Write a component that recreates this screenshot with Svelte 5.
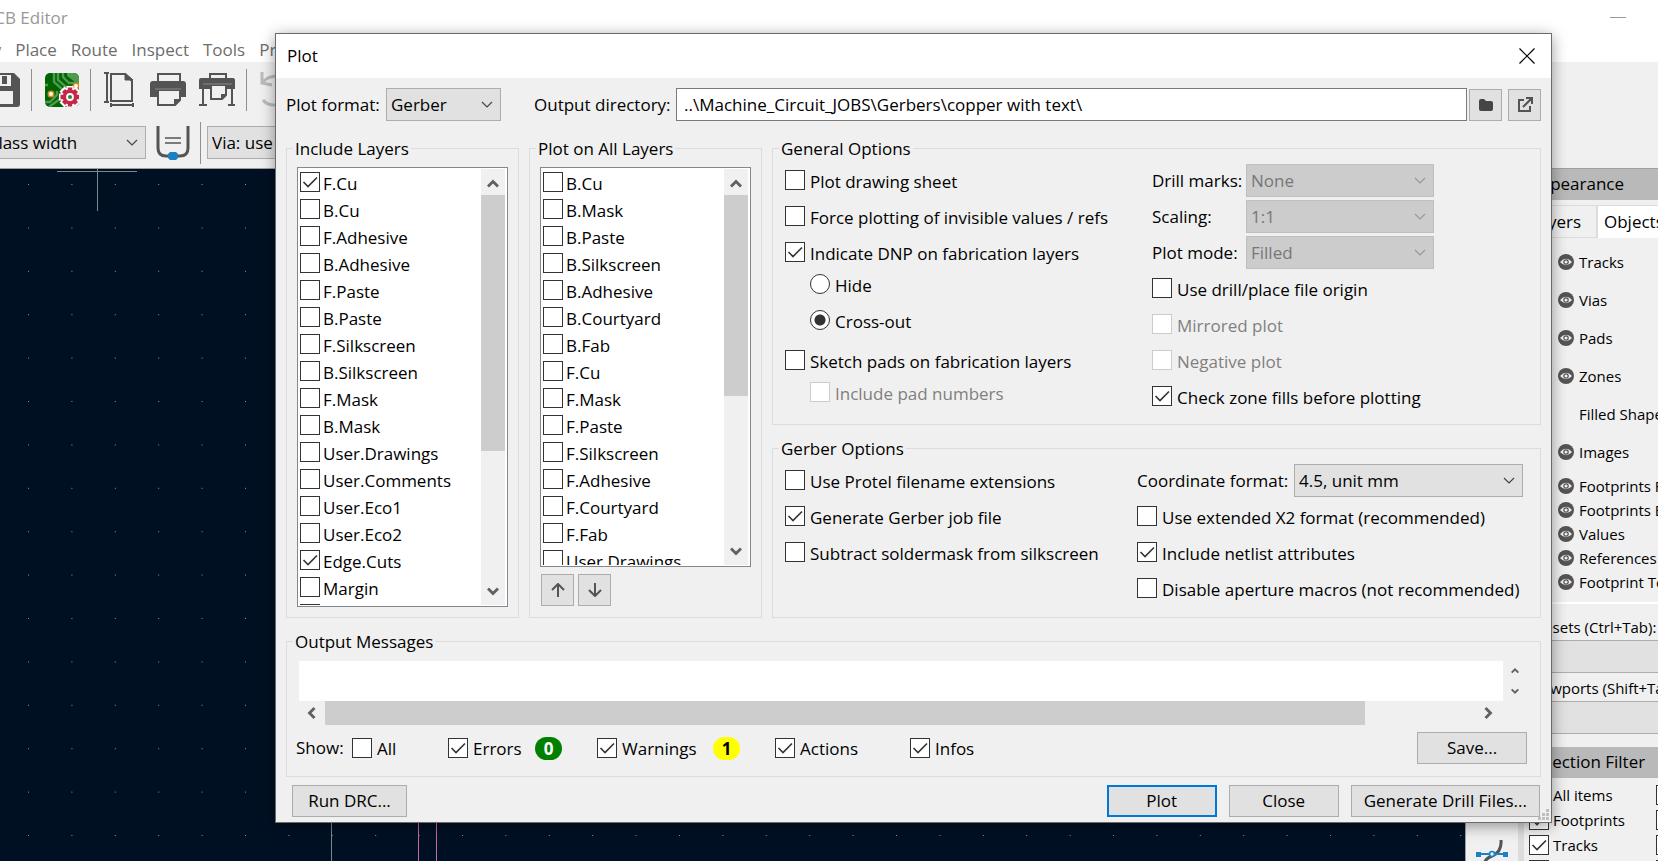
<script lang="ts">
    type Check = {label: string, on?: boolean, off?: boolean}

    const menus = ['View', 'Place', 'Route', 'Inspect', 'Tools', 'Preferences']

    const includeLayers = ['F.Cu', 'B.Cu', 'F.Adhesive', 'B.Adhesive', 'F.Paste', 'B.Paste', 'F.Silkscreen', 'B.Silkscreen',
        'F.Mask', 'B.Mask', 'User.Drawings', 'User.Comments', 'User.Eco1', 'User.Eco2', 'Edge.Cuts', 'Margin', 'F.Courtyard']
    const allLayers = ['B.Cu', 'B.Mask', 'B.Paste', 'B.Silkscreen', 'B.Adhesive', 'B.Courtyard', 'B.Fab', 'F.Cu', 'F.Mask',
        'F.Paste', 'F.Silkscreen', 'F.Adhesive', 'F.Courtyard', 'F.Fab', 'User.Drawings']
    const plotted = ['F.Cu', 'Edge.Cuts']

    const plotSelects = [
        {id: 'drill', label: 'Drill marks:', value: 'None'},
        {id: 'scaling', label: 'Scaling:', value: '1:1'},
        {id: 'mode', label: 'Plot mode:', value: 'Filled'},
    ]
    const plotChecks: Check[] = [
        {label: 'Use drill/place file origin'},
        {label: 'Mirrored plot', off: true},
        {label: 'Negative plot', off: true},
        {label: 'Check zone fills before plotting', on: true},
    ]
    const gerberLeft: Check[] = [
        {label: 'Use Protel filename extensions'},
        {label: 'Generate Gerber job file', on: true},
        {label: 'Subtract soldermask from silkscreen'},
    ]
    const gerberRight: Check[] = [
        {label: 'Use extended X2 format (recommended)'},
        {label: 'Include netlist attributes', on: true},
        {label: 'Disable aperture macros (not recommended)'},
    ]

    const objects = ['Tracks', 'Vias', 'Pads', 'Zones', 'Filled Shapes', 'Images']
    const footprintObjects = ['Footprints Front', 'Footprints Back', 'Values', 'References', 'Footprint Text']
    const filters = ['All items', 'Footprints', 'Tracks', 'Zones']
</script>

{#snippet check(item: Check)}
    <label class="check" class:off={item.off}>
        <input type="checkbox" checked={item.on} disabled={item.off}>
        <span>{item.label}</span>
    </label>
{/snippet}

{#snippet chevron(dir: string)}
    <svg class="chevron {dir}" width="12" height="12" viewBox="0 0 12 12"><path d="M1 8.500L6 3.500L11 8.500" fill="none" stroke="#606060" stroke-width="2.800"/></svg>
{/snippet}

{#snippet layerList(name: string, layers: string[], picked: string[], kind: string)}
    <div class="list {kind}" role="group" aria-label={name}>
        <div class="rows">
            {#each layers as layer}
                {@render check({label: layer, on: picked.includes(layer)})}
            {/each}
        </div>
        <div class="scroll">
            {@render chevron('up')}
            <div class="thumb"></div>
            {@render chevron('down')}
        </div>
    </div>
{/snippet}

{#snippet eye()}
    <svg width="16" height="16" viewBox="0 0 16 16">
        <circle cx="8" cy="8" r="8" fill="#545454"/>
        <path d="M2 8Q8 1.500 14 8Q8 14.500 2 8Z" fill="#f0f0f0"/>
        <circle cx="8" cy="8" r="2.200" fill="#f0f0f0" stroke="#545454" stroke-width="1.200"/>
    </svg>
{/snippet}

<div class="editor">
    <header class="titlebar">
        <span class="title">PCB Editor</span>
        <svg width="16" height="2"><path d="M0 .5H16" stroke="#999"/></svg>
    </header>
    <nav class="menubar">
        {#each menus as menu}<button>{menu}</button>{/each}
    </nav>

    <div class="toolbar main-tools">
        <svg width="20" height="34" viewBox="0 0 20 34">
            <path d="M-14 0H14L20 6V31Q20 34 17 34H-14Z" fill="#545454"/>
            <path d="M-8 2H11V13H-8ZM-8 18H13V31H-8Z" fill="#f0f0f0"/>
            <path d="M2 3H7V11H2Z" fill="#545454"/>
        </svg>
        <i></i>
        <svg width="34" height="34" viewBox="0 0 34 34">
            <clipPath id="board"><rect width="34" height="34" rx="5"/></clipPath>
            <g clip-path="url(#board)">
                <rect width="34" height="34" fill="#006400"/>
                <path d="M13 0V7L21 14H34M18 0V4L24 10H34M9 0V9L17 16V22M0 29L5 29L12 22V18M4 34L15 26V23M0 12H3" fill="none" stroke="#4f9a4f" stroke-width="2.400"/>
                <path d="M22 0H34V9H30L22 3Z" fill="#4f9a4f"/>
                <circle cx="6" cy="21" r="2.700" fill="#fff" stroke="#e08a1e" stroke-width="1.600"/>
                <circle cx="31" cy="13" r="2.700" fill="#fff" stroke="#e08a1e" stroke-width="1.600"/>
                <circle cx="30" cy="33" r="2.700" fill="#fff" stroke="#e08a1e" stroke-width="1.600"/>
                <path d="M25 13V35M14 24H36M17 16L33 32M33 16L17 32" stroke="#fff" stroke-width="7"/>
                <path d="M25 14.500V33.500M15.500 24H34.500M18.500 17.500L31.500 30.500M31.500 17.500L18.500 30.500" stroke="#c8254b" stroke-width="4.400"/>
                <circle cx="25" cy="24" r="7.400" fill="#c8254b"/>
                <circle cx="25" cy="24" r="3" fill="#2f8a3b" stroke="#fff" stroke-width="1.800"/>
            </g>
        </svg>
        <i></i>
        <svg class="page" width="30" height="36" viewBox="0 0 30 36" fill="none" stroke="#545454">
            <path d="M7 2H21L28 9V29H7Z" stroke-width="2"/><path d="M21 1V8H29Z" fill="#545454"/>
            <path d="M3 1V30M0 1H5M0 30H5M7 33H29M7 31V35M29 31V35" stroke-width="2"/>
        </svg>
        <svg width="36" height="34" viewBox="0 0 36 34">
            <path d="M8 1H30V9H8Z" fill="#f0f0f0" stroke="#545454" stroke-width="2"/>
            <path d="M3 8H33Q36 8 36 11V24H0V11Q0 8 3 8Z" fill="#545454"/>
            <path d="M8 17H30V27L25 32H8Z" fill="#f0f0f0" stroke="#545454" stroke-width="2"/>
            <path d="M5 16H31" stroke="#888"/><path d="M24 26H31L24 33Z" fill="#545454"/>
        </svg>
        <svg width="36" height="34" viewBox="0 0 36 34">
            <path d="M11 1H27V6H11Z" fill="#f0f0f0" stroke="#545454" stroke-width="2"/>
            <path d="M2 5H34Q36 5 36 7V16H0V7Q0 5 2 5Z" fill="#545454"/>
            <path d="M4 16V32M0 32H8M33 16V32M29 32H36" stroke="#545454" stroke-width="2"/>
            <path d="M12 12H27V22L23 26H12Z" fill="#f0f0f0" stroke="#545454" stroke-width="2"/>
            <path d="M4 11H33" stroke="#888"/><path d="M22 21H28L22 27Z" fill="#545454"/>
        </svg>
        <i></i>
        <svg width="34" height="36" viewBox="0 0 34 36" fill="none" stroke="#bbb" stroke-width="3">
            <path d="M2 0V11L12 13M2 11Q10 2 20 5Q30 9 28 20Q25 34 12 33Q6 32 3 28"/>
        </svg>
    </div>

    <div class="toolbar sub-tools">
        <select aria-label="Track width"><option>Track: use netclass width</option></select>
        <svg width="34" height="34" viewBox="0 0 34 34" fill="none" stroke="#545454">
            <path d="M2 0V22Q2 30 10 30H24Q32 30 32 22V0" stroke-width="3"/>
            <path d="M9 12H25M9 17H25" stroke-width="1.500"/>
            <path d="M14 26H20L22 28V32L20 34H14L12 32V28Z" fill="#1a81c4" stroke="none"/>
        </svg>
        <i></i>
        <select aria-label="Via size"><option>Via: use netclass sizes</option></select>
    </div>

    <div class="workspace">
        <svg class="canvas">
            <defs>
                <pattern id="grid" width="43.400" height="43.400" patternUnits="userSpaceOnUse" x="28" y="15"><path d="M0 .5H1" stroke="#8d979f"/></pattern>
            </defs>
            <rect width="100%" height="100%" fill="url(#grid)"/>
            <path d="M57 2.500H137M97.500 0V42M331.500 600V800" stroke="#7d8791"/>
            <path d="M418.500 600V800M436.500 600V800" stroke="#c868a8"/>
        </svg>
        <div class="side-tools">
            <svg width="34" height="34" viewBox="0 0 34 34" fill="none">
                <path d="M26 0Q27 12 17 16Q7 19 8 34" stroke="#545454" stroke-width="3"/>
                <path d="M2 14H32" stroke="#1a81c4" stroke-width="2"/>
                <path d="M1 12H6V17H1ZM28 12H33V17H28Z" fill="#1a81c4"/>
                <circle cx="17" cy="14" r="2.500" fill="#f0f0f0" stroke="#1a81c4" stroke-width="1.600"/>
            </svg>
        </div>
        <aside>
            <h2>Appearance</h2>
            <div class="tabs"><button>Layers</button><button class="current">Objects</button></div>
            <ul class="objects">
                {#each objects as name}<li><b>{#if name !== 'Filled Shapes'}{@render eye()}{/if}</b>{name}</li>{/each}
            </ul>
            <ul class="objects tight">
                {#each footprintObjects as name}<li><b>{@render eye()}</b>{name}</li>{/each}
            </ul>
            <div class="presets">
                <label for="presets">Presets (Ctrl+Tab):</label>
                <select id="presets"><option>---</option></select>
                <label for="viewports">Viewports (Shift+Tab):</label>
                <select id="viewports"><option>---</option></select>
            </div>
            <h2 class="filter-head">Selection Filter</h2>
            <div class="filters">
                {#each filters as name}
                    {@render check({label: name, on: true})}
                    <input type="checkbox" aria-label="{name} filter">
                {/each}
            </div>
        </aside>
    </div>
</div>

<div class="dialog" role="dialog" aria-label="Plot">
    <header>
        <h1>Plot</h1>
        <button class="x" aria-label="Close dialog"><svg width="16" height="16" viewBox="0 0 16 16"><path d="M.5.5L15.500 15.500M15.500.5L.5 15.500" stroke="#000" stroke-width="1.200"/></svg></button>
    </header>

    <div class="output-row">
        <label for="format">Plot format:</label>
        <select id="format"><option>Gerber</option></select>
        <label for="directory">Output directory:</label>
        <input id="directory" type="text" value="..\Machine_Circuit_JOBS\Gerbers\copper with text\">
        <button class="small" aria-label="Browse"><svg width="14" height="12" viewBox="0 0 14 12"><path d="M0 2Q0 0 2 0H5L7 2H12Q14 2 14 4V10Q14 12 12 12H2Q0 12 0 10Z" fill="#454545"/></svg></button>
        <button class="small" aria-label="Open directory"><svg width="16" height="16" viewBox="0 0 16 16" fill="none" stroke="#545454" stroke-width="2"><path d="M7 3H2V14H13V9M9 1H15V7M15 1L6 10"/></svg></button>
    </div>

    <div class="groups">
        <fieldset class="layers">
            <legend>Include Layers</legend>
            {@render layerList('Include layers', includeLayers, plotted, 'tall')}
        </fieldset>
        <fieldset class="layers">
            <legend>Plot on All Layers</legend>
            {@render layerList('Plot on all layers', allLayers, [], 'short')}
            <div class="move">
                <button class="small" aria-label="Move up"><svg width="14" height="14" viewBox="0 0 14 14"><path d="M7 14V2M1 7L7 1L13 7" fill="none" stroke="#545454" stroke-width="2"/></svg></button>
                <button class="small" aria-label="Move down"><svg width="14" height="14" viewBox="0 0 14 14"><path d="M7 0V12M1 7L7 13L13 7" fill="none" stroke="#545454" stroke-width="2"/></svg></button>
            </div>
        </fieldset>

        <div class="options">
            <fieldset class="general">
                <legend>General Options</legend>
                <div class="col">
                    {@render check({label: 'Plot drawing sheet'})}
                    {@render check({label: 'Force plotting of invisible values / refs'})}
                    {@render check({label: 'Indicate DNP on fabrication layers', on: true})}
                    <div class="nested dnp">
                        <label class="check"><input type="radio" name="dnp"><span>Hide</span></label>
                        <label class="check"><input type="radio" name="dnp" checked><span>Cross-out</span></label>
                    </div>
                    {@render check({label: 'Sketch pads on fabrication layers'})}
                    <div class="nested">
                        {@render check({label: 'Include pad numbers', off: true})}
                    </div>
                </div>
                <div class="col">
                    {#each plotSelects as item}
                        <div class="field">
                            <label for={item.id}>{item.label}</label>
                            <select id={item.id} disabled><option>{item.value}</option></select>
                        </div>
                    {/each}
                    {#each plotChecks as item}{@render check(item)}{/each}
                </div>
            </fieldset>

            <fieldset class="gerber">
                <legend>Gerber Options</legend>
                <div class="col">
                    {#each gerberLeft as item}{@render check(item)}{/each}
                </div>
                <div class="col">
                    <div class="field">
                        <label for="coords">Coordinate format:</label>
                        <select id="coords"><option>4.5, unit mm</option></select>
                    </div>
                    {#each gerberRight as item}{@render check(item)}{/each}
                </div>
            </fieldset>
        </div>
    </div>

    <fieldset class="messages">
        <legend>Output Messages</legend>
        <div class="log">
            <textarea aria-label="Output messages" readonly></textarea>
            <div class="spin">{@render chevron('up')}{@render chevron('down')}</div>
        </div>
        <div class="hscroll">
            {@render chevron('left')}
            <div class="track"><div class="thumb"></div></div>
            {@render chevron('right')}
        </div>
        <div class="show">
            <span>Show:</span>
            <div class="all">{@render check({label: 'All'})}</div>
            <div class="errors">{@render check({label: 'Errors', on: true})}<em class="badge green">0</em></div>
            <div class="warnings">{@render check({label: 'Warnings', on: true})}<em class="badge yellow">1</em></div>
            <div class="actions">{@render check({label: 'Actions', on: true})}</div>
            {@render check({label: 'Infos', on: true})}
            <button class="push">Save...</button>
        </div>
    </fieldset>

    <footer>
        <button class="push">Run DRC...</button>
        <button class="push default">Plot</button>
        <button class="push">Close</button>
        <button class="push">Generate Drill Files...</button>
    </footer>
    <svg class="grip" width="12" height="12" viewBox="0 0 12 12"><path d="M8 0H11V3H8ZM4 4H7V7H4ZM8 4H11V7H8ZM0 8H3V11H0ZM4 8H7V11H4ZM8 8H11V11H8Z" fill="#bfbfbf"/></svg>
</div>

<style>
    :global(body) {
        background: #f0f0f0;
        font: 17px/24px "Open Sans", "Noto Sans", sans-serif;
        color: #000;
        overflow: hidden;
    }

    * {
        box-sizing: border-box;
    }

    h1, h2, ul, li, fieldset, legend, input, textarea {
        margin: 0;
        padding: 0;
        font: inherit;
        list-style: none;
    }

    button, select {
        margin: 0;
        font: inherit;
        color: inherit;
        border: 1px solid #adadad;
        border-radius: 0;
        background-color: #e1e1e1;
    }

    svg {
        flex: none;
        display: block;
    }

    select {
        height: 33px;
        padding: 0 28px 0 4px;
        appearance: none;
        background: #e1e1e1 url("data:image/svg+xml,%3Csvg xmlns='http://www.w3.org/2000/svg' width='12' height='7'%3E%3Cpath d='M1 1L6 6L11 1' fill='none' stroke='%23444' stroke-width='1.200'/%3E%3C/svg%3E") no-repeat right 7px center;
    }

    select:disabled {
        color: #777;
        opacity: 1;
        border-color: #bfbfbf;
        background: #ccc url("data:image/svg+xml,%3Csvg xmlns='http://www.w3.org/2000/svg' width='12' height='7'%3E%3Cpath d='M1 1L6 6L11 1' fill='none' stroke='%23999' stroke-width='1.200'/%3E%3C/svg%3E") no-repeat right 7px center;
    }

    input[type="checkbox"], input[type="radio"] {
        flex: none;
        appearance: none;
        width: 20px;
        height: 20px;
        border: 1px solid #333;
        background: #fff;
    }

    input[type="checkbox"]:checked {
        background: #fff url("data:image/svg+xml,%3Csvg xmlns='http://www.w3.org/2000/svg' width='18' height='18'%3E%3Cpath d='M2.500 9L7 13.500L16 4.500' fill='none' stroke='%23333' stroke-width='1.600'/%3E%3C/svg%3E") no-repeat center;
    }

    input[type="radio"] {
        border-radius: 50%;
    }

    input[type="radio"]:checked {
        background: radial-gradient(circle, #333 0 5px, #fff 6px);
    }

    input[type="checkbox"]:disabled {
        border-color: #ccc;
    }

    .check {
        display: flex;
        gap: 5px;
        height: 20px;
        white-space: nowrap;
    }

    .check.off {
        color: #808080;
    }

    /* editor window */
    .editor {
        height: 100vh;
        display: flex;
        flex-direction: column;
        overflow: hidden;
    }

    .titlebar {
        display: flex;
        justify-content: space-between;
        align-items: center;
        height: 36px;
        padding-right: 32px;
        background: #fff;
        color: #999;
    }

    .title {
        margin-left: -16px;
    }

    .menubar {
        display: flex;
        gap: 14px;
        height: 26px;
        padding-top: 1px;
        background: #fff;
    }

    .menubar button {
        padding: 0;
        border: 0;
        background: none;
        color: #6d6d6d;
    }

    .menubar button:first-child {
        margin-left: -36px;
    }

    .toolbar {
        display: flex;
        align-items: center;
    }

    .toolbar i {
        width: 1px;
        height: 42px;
        background: #8f8f8f;
    }

    .main-tools {
        height: 56px;
        gap: 13px;
    }

    .main-tools i {
        margin-left: -2px;
    }

    .page {
        margin-right: 3px;
    }

    .sub-tools {
        height: 51px;
        gap: 10px;
        padding-bottom: 1px;
        border-bottom: 1px solid #a0a0a0;
    }

    .sub-tools select {
        width: 271px;
    }

    .sub-tools select:first-child {
        margin-left: -125px;
    }

    .sub-tools i {
        margin-right: -4px;
    }

    .workspace {
        flex: 1;
        min-height: 0;
        display: flex;
    }

    .canvas {
        flex: 1;
        width: 0;
        height: 100%;
        background: #001023;
    }

    .side-tools {
        display: flex;
        justify-content: center;
        width: 53px;
        padding-top: 671px;
        border-left: 1px solid #a0a0a0;
    }

    aside {
        width: 140px;
        border-left: 6px solid #dcdcdc;
        font-size: 15px;
        white-space: nowrap;
        overflow: hidden;
    }

    aside h2 {
        height: 31px;
        padding: 3px 0 0 5px;
        background: #b9b9b9;
        font-size: 17px;
    }

    .tabs {
        display: flex;
        height: 38px;
        padding-top: 5px;
    }

    .tabs button {
        flex: none;
        width: 73px;
        padding: 0 15px 0 0;
        border-color: #dcdcdc;
        background: none;
        font-size: 17px;
        text-align: right;
    }

    .tabs .current {
        width: 90px;
        padding: 0 0 0 6px;
        border-bottom: 0;
        background: #fff;
        text-align: left;
    }

    .objects {
        padding: 5px 0 0 34px;
    }

    .objects li {
        display: flex;
        align-items: center;
        height: 38px;
    }

    .objects b {
        flex: none;
        width: 21px;
    }

    .objects.tight {
        padding-top: 3px;
    }

    .tight li {
        height: 24px;
    }

    .presets {
        display: grid;
        grid-template-rows: 28px 33px 28px 33px;
        margin-top: 8px;
        padding: 8px 0 0 5px;
        border-top: 2px solid #fff;
    }

    .presets label {
        padding-top: 3px;
    }

    .filter-head {
        margin-top: 13px;
    }

    .filters {
        display: grid;
        grid-template-columns: 127px 20px;
        row-gap: 5px;
        padding: 7px 0 0 5px;
    }

    .filters .check {
        gap: 4px;
    }

    .filters .check span {
        line-height: 20px;
    }

    /* plot dialog */
    .dialog {
        position: absolute;
        top: 33px;
        left: 275px;
        right: 106px;
        border: 1px solid #6b6b6b;
        background: #f0f0f0;
        box-shadow: 0 3px 14px rgba(0, 0, 0, .4);
    }

    .dialog header {
        display: flex;
        align-items: center;
        justify-content: space-between;
        height: 44px;
        padding: 0 16px 0 11px;
        background: #fff;
    }

    .x {
        padding: 0;
        border: 0;
        background: none;
    }

    .output-row {
        display: flex;
        align-items: center;
        padding: 10px 10px 0;
    }

    .output-row label {
        width: 100px;
        white-space: nowrap;
    }

    .output-row select {
        width: 115px;
        margin-right: 33px;
    }

    .output-row select + label {
        width: 142px;
    }

    .output-row input {
        flex: 1;
        height: 33px;
        margin-right: 2px;
        padding-left: 7px;
        border: 1px solid #7a7a7a;
        background: #fff;
    }

    .small {
        display: flex;
        align-items: center;
        justify-content: center;
        width: 33px;
        height: 32px;
        padding: 0;
    }

    .small + .small {
        margin-left: 6px;
    }

    .groups {
        display: flex;
        gap: 10px;
        padding: 15px 10px 0;
    }

    fieldset {
        min-width: 0;
        border: 1px solid #dcdcdc;
    }

    legend {
        height: 24px;
        margin-left: -6px;
        padding: 0 2px;
        line-height: 26px;
    }

    .layers {
        width: 233px;
        padding: 7px 10px 10px;
    }

    .layers legend {
        margin-left: -4px;
    }

    .list {
        display: flex;
        padding: 1px 2px;
        border: 1px solid #828790;
        background: #fff;
    }

    .tall {
        height: 440px;
    }

    .short {
        height: 400px;
    }

    .rows {
        flex: 1;
        display: flex;
        flex-direction: column;
        gap: 7px;
        padding-top: 3px;
        overflow: hidden;
    }

    .rows .check {
        flex: none;
        gap: 3px;
    }

    .scroll {
        display: flex;
        flex-direction: column;
        align-items: center;
        width: 24px;
        padding: 9px 0 8px;
        background: #f0f0f0;
    }

    .scroll .thumb {
        width: 24px;
        margin: 5px 0 auto;
    }

    .thumb {
        background: #cdcdcd;
    }

    .tall .thumb {
        height: 256px;
    }

    .short .thumb {
        height: 201px;
    }

    .down {
        transform: rotate(180deg);
    }

    .left {
        transform: rotate(-90deg);
    }

    .right {
        transform: rotate(90deg);
    }

    .move {
        display: flex;
        padding: 7px 0 0 1px;
    }

    .move .small + .small {
        margin-left: 4px;
    }

    .options {
        flex: 1;
        display: flex;
        flex-direction: column;
        justify-content: space-between;
    }

    .options fieldset {
        display: grid;
        padding: 10px 12px 0;
    }

    .general {
        height: 289px;
        grid-template-columns: 367px 1fr;
    }

    .gerber {
        height: 182px;
        grid-template-columns: 352px 1fr;
    }

    .col {
        display: flex;
        flex-direction: column;
        gap: 16px;
    }

    .col + .col {
        margin-top: -6px;
    }

    .nested {
        display: flex;
        flex-direction: column;
        gap: 16px;
        margin: -4px 0 0 25px;
    }

    .dnp {
        margin-bottom: 4px;
    }

    .field {
        display: flex;
        align-items: center;
        height: 33px;
        margin-bottom: -13px;
    }

    .field + .check {
        margin-top: 6px;
    }

    .general .field label {
        width: 94px;
    }

    .general .field select {
        width: 188px;
    }

    .gerber .field label {
        width: 157px;
        white-space: nowrap;
    }

    .gerber .field select {
        width: 229px;
    }

    .messages {
        margin: 11px 10px 0;
        padding: 8px 13px 12px 12px;
    }

    .log {
        display: flex;
    }

    .log textarea {
        flex: 1;
        height: 40px;
        border: 0;
        background: #fff;
        resize: none;
    }

    .spin {
        display: flex;
        flex-direction: column;
        justify-content: space-between;
        align-items: center;
        width: 24px;
        padding: 6px 0;
    }

    .spin svg {
        width: 8px;
        height: 8px;
    }

    .hscroll {
        display: flex;
        align-items: center;
        height: 24px;
        padding: 0 33px 0 7px;
    }

    .track {
        flex: 1;
        height: 24px;
        margin: 0 8px 0 7px;
    }

    .track .thumb {
        width: calc(100% - 109px);
        height: 24px;
    }

    .show {
        display: flex;
        align-items: center;
        height: 32px;
        margin: 7px 0 0 -3px;
    }

    .show > div {
        display: flex;
        align-items: center;
    }

    .show > span {
        width: 56px;
    }

    .show .check span {
        line-height: 22px;
    }

    .all {
        width: 96px;
    }

    .errors {
        width: 149px;
    }

    .warnings {
        width: 178px;
    }

    .actions {
        width: 135px;
    }

    .errors .check {
        width: 87px;
    }

    .warnings .check {
        width: 116px;
    }

    .badge {
        width: 27px;
        height: 23px;
        border-radius: 12px;
        font-style: normal;
        font-weight: 700;
        line-height: 23px;
        text-align: center;
    }

    .green {
        background: #008000;
        color: #fff;
    }

    .yellow {
        background: #ff0;
    }

    .push {
        min-width: 110px;
        height: 32px;
        padding: 0 12px;
        white-space: nowrap;
    }

    .show .push {
        margin-left: auto;
    }

    footer {
        display: flex;
        gap: 12px;
        padding: 8px 11px 5px 16px;
    }

    footer .push:first-child {
        min-width: 115px;
        margin-right: auto;
    }

    .default {
        border: 2px solid #0078d7;
    }

    .grip {
        position: absolute;
        right: 1px;
        bottom: 1px;
    }
</style>
